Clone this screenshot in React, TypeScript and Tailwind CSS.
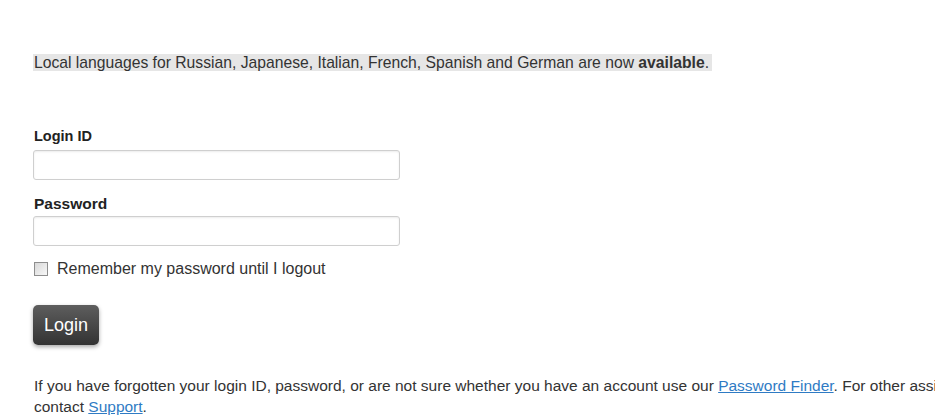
export default function App() {
  return (
    <div className="h-[420px] w-[935px] overflow-hidden bg-white text-[15.7px] leading-[17px] text-[#333] [font-family:'Liberation_Sans',Arial,sans-serif]">
      <div className="px-[34px] pt-[54px]">
        <p>
          <span className="-ml-px bg-[#e6e6e6] py-0 pl-px pr-[3px]">
            Local languages for Russian, Japanese, Italian, French, Spanish and German are now{" "}
            <b>available</b>.
          </span>
        </p>

        <form className="mt-[57px] flex flex-col">
          <label className="text-[14.5px] font-bold text-[#222]">Login ID</label>
          <input
            type="text"
            className="mt-[5px] -ml-px h-[30px] w-[367px] rounded-[3px] border border-[#cfcfcf] shadow-[inset_0_1px_2px_rgba(0,0,0,0.08)] outline-none"
          />
          <label className="mt-[15px] text-[15.5px] font-bold text-[#222]">Password</label>
          <input
            type="password"
            className="mt-[4px] -ml-px h-[30px] w-[367px] rounded-[3px] border border-[#cfcfcf] shadow-[inset_0_1px_2px_rgba(0,0,0,0.08)] outline-none"
          />
          <label className="mt-[14px] flex items-center gap-[9px] text-[16px]">
            <span className="h-[14px] w-[14px] border border-[#8e8e8e] bg-gradient-to-br from-[#d8d8d8] to-[#f8f8f8]" />
            <span>Remember my password until I logout</span>
          </label>
          <button
            type="button"
            className="mt-[28px] -ml-px h-[40px] w-[66px] rounded-[5px] bg-gradient-to-b from-[#5e5e5e] to-[#333] text-[18px] text-white shadow-[0_2px_4px_rgba(0,0,0,0.35)]"
          >
            Login
          </button>
        </form>

        <p className="mt-[30px] whitespace-nowrap text-[15.5px] leading-[21px]">
          If you have forgotten your login ID, password, or are not sure whether you have an account use our{" "}
          <a href="#" className="text-[#2f7bc4] underline">
            Password Finder
          </a>
          . For other assistance, please
          <br />
          contact{" "}
          <a href="#" className="text-[#2f7bc4] underline">
            Support
          </a>
          .
        </p>
      </div>
    </div>
  );
}
